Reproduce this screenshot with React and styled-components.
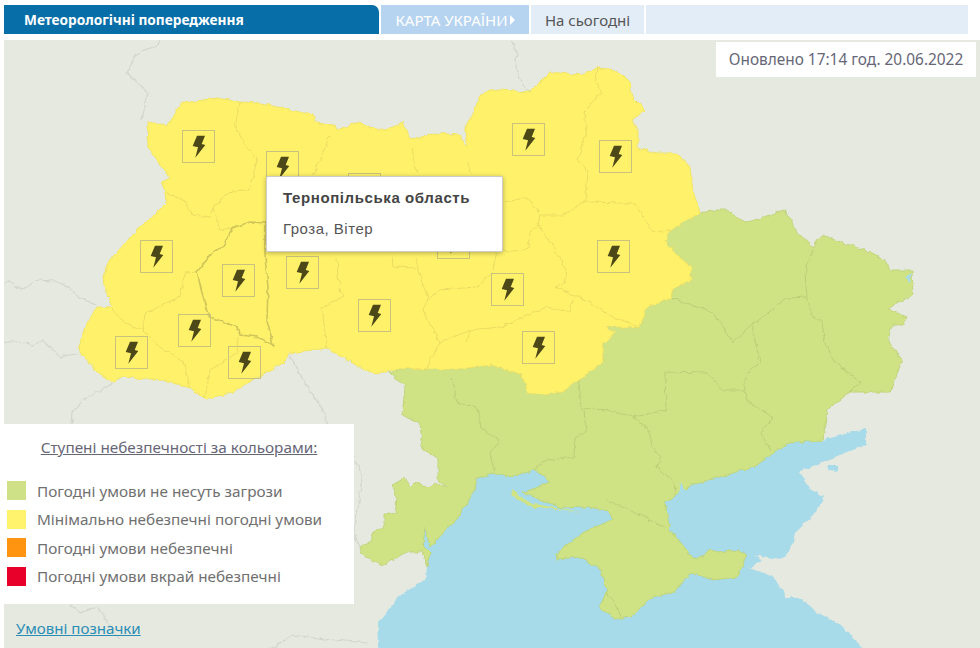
import React from "react";
import styled, { createGlobalStyle } from "styled-components";

const GlobalStyle = createGlobalStyle`
  html, body {
    margin: 0;
    padding: 0;
    background: #fff;
    font-family: "Noto Sans", "Open Sans", sans-serif;
  }
`;

// map outlines, in page coordinates (viewBox starts at the map's top left corner)
const YELLOW =
  "147,122 167,125 182,103 217,98 240,102 260,103 290,110 313,115 315,123 335,125 337,130 360,122 367,127 385,130 403,123 412,140 433,133 460,135 467,148 465,128 483,92 500,90 530,92 550,72 580,75 598,68 617,70 630,83 633,98 645,110 633,120 638,130 638,148 657,153 677,153 690,167 693,190 700,213 687,220 670,230 665,242 680,257 692,267 690,280 672,290 672,298 647,307 640,327 607,327 615,333 602,345 603,363 578,380 563,392 542,395 528,393 522,375 492,365 450,370 403,368 387,372 370,373 343,357 327,348 290,353 283,363 253,380 230,393 207,399 190,388 163,380 123,377 112,382 95,370 78,350 87,323 97,307 112,308 103,283 107,263 137,230 167,203 162,182 170,178 148,147";

const GREEN =
  "700,213 717,210 727,210 745,223 785,210 797,232 813,247 822,235 843,243 865,250 885,260 890,270 912,270 913,295 888,308 907,318 902,325 892,325 888,340 902,360 891,392 850,392 827,410 823,440 788,443 754,467 727,475 691,485 665,503 670,530 695,560 711,550 720,553 734,550 747,553 738,577 713,580 691,573 675,592 652,597 631,617 615,619 599,607 607,590 599,568 579,557 557,559 556,553 584,532 613,520 607,510 588,507 563,508 522,493 549,483 545,477 534,470 513,477 495,473 477,478 475,490 456,520 430,547 425,527 423,545 430,552 427,567 423,552 407,552 383,565 365,558 359,547 372,542 372,533 385,525 385,515 395,513 397,498 392,485 405,478 410,487 415,482 428,488 433,483 447,487 438,480 438,458 423,450 420,423 402,415 405,387 390,373 403,368 450,370 492,365 522,375 528,393 542,395 563,392 578,380 603,363 602,345 615,333 607,327 640,327 647,307 672,298 672,290 690,280 692,267 680,257 665,242 670,230 687,220";

const SEA =
  "427,567 425,580 400,595 378,623 380,665 880,665 841,625 813,610 802,598 786,598 774,577 749,568 763,560 754,555 781,559 791,550 795,533 816,513 824,497 809,488 799,472 827,460 866,445 866,429 856,431 823,440 788,443 700,470 500,460 470,470 420,525";

const YELLOW_BORDERS = [
  "240,102 235,127 243,142 257,160 250,190 227,193 213,207 220,230 232,228",
  "167,193 183,200 193,215 210,217 213,207",
  "112,308 125,323 143,330 145,313 180,297 185,273 197,272",
  "143,330 160,347 183,362 190,388",
  "238,337 237,353 210,370 205,398",
  "337,257 338,277 343,297 322,308 327,348",
  "415,257 420,277 428,298 423,310 440,343 430,360 425,371",
  "392,255 393,267 415,268",
  "330,135 317,167 312,175",
  "412,148 417,173",
  "467,160 472,175",
  "428,298 440,290 463,288 477,287 492,273 497,253",
  "440,343 470,330 500,327 523,317 547,307 570,312 573,295",
  "467,343 470,330",
  "598,68 595,83 602,92 583,112 587,128 578,160 588,173 585,202",
  "503,203 527,197 540,215 563,215 585,202 623,203 635,203 653,232 670,230",
  "540,215 538,225 530,232 528,248 518,252 500,250",
  "538,225 550,242 567,270 565,283 555,287 573,295 590,303 613,317 640,327",
];

const TERNOPIL =
  "265,223 250,222 232,228 225,245 213,252 197,272 202,293 210,317 237,327 240,335 258,337 273,345 267,320 268,287 265,257";

const GREEN_BORDERS = [
  "813,250 805,273 807,297 812,315 822,323 825,343 833,360 860,382 850,392",
  "672,298 713,313 733,342 750,327 787,298 807,297",
  "752,327 760,362 745,377 745,392 749,403 774,417 761,433 770,450",
  "665,372 707,373 723,390 745,390",
  "665,372 666,410 634,417 606,410 581,408 579,380",
  "634,417 649,430 652,447 661,457 656,467 674,483 675,497",
  "584,410 586,432 575,438 574,458 545,460 534,470",
  "452,377 457,403 477,407 481,428 499,440 490,453 495,473",
  "607,500 645,517 666,528",
  "606,592 613,600 622,617",
];

const NEIGHBOUR_BORDERS = [
  "160,40 158,45 139,52 133,60 127,73 148,92 142,120",
  "511,40 518,55 515,60 517,72 523,85 530,92",
  "0,285 10,282 22,290 37,280 55,281 68,287 80,298 97,305",
  "0,343 17,341 33,345 43,340 60,357 78,353",
  "113,383 93,395 82,400 73,412 72,426",
  "290,355 303,380 323,410 328,426",
  "353,457 362,477 358,510 353,530 359,547",
  "70,604 80,613 97,607 120,640",
  "260,655 293,635 333,640 367,643",
];

const MARKERS = [
  [199, 147], [283, 168], [365, 190], [529, 140], [616, 157], [157, 257],
  [239, 281], [303, 273], [375, 316], [195, 331], [132, 353], [245, 363],
  [454, 243], [508, 290], [614, 257], [539, 348],
];

const LEVELS = [
  { color: "#cfe186", label: "Погодні умови не несуть загрози" },
  { color: "#fff36d", label: "Мінімально небезпечні погодні умови" },
  { color: "#ff9410", label: "Погодні умови небезпечні" },
  { color: "#e8002a", label: "Погодні умови вкрай небезпечні" },
];

const Page = styled.div`
  width: 980px;
  height: 648px;
  overflow: hidden;
`;

const TabBar = styled.div`
  display: flex;
  height: 29px;
  padding: 5px 12px 6px 4px;
  gap: 2px;
`;

const TitleTab = styled.div`
  width: 375px;
  padding: 0 0 1px 20px;
  box-sizing: border-box;
  display: flex;
  align-items: center;
  background: #076ea8;
  border-top-right-radius: 7px;
  color: #fff;
  font-size: 13.7px;
  font-weight: 700;
`;

const CountryTab = styled.div`
  width: 148px;
  display: flex;
  align-items: center;
  justify-content: center;
  gap: 2px;
  background: #b6d4f0;
  color: #fff;
  font-size: 15px;
`;

const Arrow = styled.span`
  width: 0;
  height: 0;
  border-left: 5px solid #fff;
  border-top: 5px solid transparent;
  border-bottom: 5px solid transparent;
`;

const DayTab = styled.div`
  width: 113px;
  display: flex;
  align-items: center;
  justify-content: center;
  background: #e3edf7;
  color: #555;
  font-size: 15px;
`;

const EmptyTab = styled.div`
  flex: 1;
  background: #e3edf7;
`;

const MapArea = styled.div`
  position: relative;
  width: 976px;
  height: 608px;
  margin-left: 4px;
  overflow: hidden;
  background: #e6e9e0;
`;

const MapSvg = styled.svg`
  position: absolute;
  inset: 0;
`;

const Marker = styled.div`
  position: absolute;
  left: ${(p) => p.$x - 21}px;
  top: ${(p) => p.$y - 57}px;
  width: 33px;
  height: 33px;
  box-sizing: border-box;
  border: 1px solid #c9c27c;
`;

const Updated = styled.div`
  position: absolute;
  top: 2px;
  right: 4px;
  width: 260px;
  height: 35px;
  display: flex;
  align-items: center;
  justify-content: center;
  background: #fff;
  color: #667;
  font-size: 15.4px;
`;

const Tooltip = styled.div`
  position: absolute;
  left: 262px;
  top: 136px;
  width: 237px;
  height: 76px;
  box-sizing: border-box;
  padding: 12px 16px;
  background: #fff;
  border: 1px solid #ccc;
  border-radius: 2px;
  box-shadow: 0 1px 5px rgba(0, 0, 0, 0.3);
  font-family: "Liberation Sans", Arial, sans-serif;
`;

const TooltipTitle = styled.div`
  color: #444;
  font-size: 15px;
  font-weight: 700;
  letter-spacing: 0.6px;
  line-height: 18px;
`;

const TooltipText = styled.div`
  margin-top: 13px;
  color: #555;
  font-size: 15px;
  letter-spacing: 0.5px;
  line-height: 18px;
`;

const Legend = styled.div`
  position: absolute;
  left: 0;
  top: 384px;
  width: 350px;
  height: 180px;
  background: #fff;
`;

const LegendTitle = styled.div`
  height: 57px;
  padding-top: 13px;
  box-sizing: border-box;
  text-align: center;
  color: #667;
  font-size: 15.3px;
  text-decoration: underline;
`;

const LegendList = styled.ul`
  list-style: none;
  margin: 0;
  padding: 0 0 0 3px;
  display: flex;
  flex-direction: column;
  gap: 9.6px;
`;

const LegendRow = styled.li`
  display: flex;
  align-items: center;
  gap: 11px;
  height: 19px;
  padding-bottom: 1px;
  margin-bottom: -1px;
  color: #707070;
  font-size: 15.3px;
`;

const Swatch = styled.span`
  width: 19px;
  height: 19px;
  background: ${(p) => p.$color};
`;

const LegendLink = styled.a`
  position: absolute;
  left: 12px;
  top: 578px;
  color: #2a8db5;
  font-size: 15.1px;
  text-decoration: underline;
`;

const Bolt = () => (
  <svg width="31" height="31" viewBox="1 1 31 31">
    <path d="M15 5.7H23L19.7 14L23.3 15L13.3 27.7L16 17.3L10.7 16Z" fill="#4c4818" />
  </svg>
);

const UkraineMap = () => (
  <MapSvg width="976" height="608" viewBox="4 40 976 608">
    <defs>
      <filter id="rough" x="-5%" y="-5%" width="110%" height="110%" colorInterpolationFilters="sRGB">
        <feTurbulence type="fractalNoise" baseFrequency="0.16" numOctaves="2" seed="4" />
        <feDisplacementMap in="SourceGraphic" scale="5" xChannelSelector="R" yChannelSelector="G" />
      </filter>
    </defs>
    <g filter="url(#rough)">
      <g fill="none" stroke="#d2d6cd" strokeWidth="1.2">
        {NEIGHBOUR_BORDERS.map((pts) => <polyline key={pts} points={pts} />)}
      </g>
      <polygon points={SEA} fill="#a8dbe9" />
      <polygon points={GREEN} fill="#d0e384" stroke="#bfd47c" strokeWidth="1" />
      <polygon points={YELLOW} fill="#fff26a" stroke="#efe367" strokeWidth="1" />
      <polygon points="672,508 682,503 680,500 671,504" fill="#a8dbe9" />
      <polygon points="679,494 681,482 685,491" fill="#a8dbe9" />
      <polygon points="905,277 912,272 910,282" fill="#a8dbe9" />
      <polygon points="827,466 838,466 838,471 829,470" fill="#a8dbe9" />
      <polygon points="511,490 531,503 581,513 560,510 530,506 512,497" fill="#d0e384" />
      <g fill="none" stroke="#bccf78" strokeWidth="1">
        {GREEN_BORDERS.map((pts) => <polyline key={pts} points={pts} />)}
      </g>
      <g fill="none" stroke="#e9dc62" strokeWidth="1">
        {YELLOW_BORDERS.map((pts) => <polyline key={pts} points={pts} />)}
      </g>
      <polygon points={TERNOPIL} fill="none" stroke="#cfc55a" strokeWidth="1.6" />
    </g>
  </MapSvg>
);

export default function App() {
  return (
    <Page>
      <GlobalStyle />
      <TabBar>
        <TitleTab>Метеорологічні попередження</TitleTab>
        <CountryTab>КАРТА УКРАЇНИ<Arrow /></CountryTab>
        <DayTab>На сьогодні</DayTab>
        <EmptyTab />
      </TabBar>
      <MapArea>
        <UkraineMap />
        {MARKERS.map(([x, y]) => (
          <Marker key={`${x}-${y}`} $x={x} $y={y}><Bolt /></Marker>
        ))}
        <Updated>Оновлено 17:14 год. 20.06.2022</Updated>
        <Tooltip>
          <TooltipTitle>Тернопільська область</TooltipTitle>
          <TooltipText>Гроза, Вітер</TooltipText>
        </Tooltip>
        <Legend>
          <LegendTitle>Ступені небезпечності за кольорами:</LegendTitle>
          <LegendList>
            {LEVELS.map((level) => (
              <LegendRow key={level.label}>
                <Swatch $color={level.color} />
                {level.label}
              </LegendRow>
            ))}
          </LegendList>
        </Legend>
        <LegendLink href="#">Умовні позначки</LegendLink>
      </MapArea>
    </Page>
  );
}
